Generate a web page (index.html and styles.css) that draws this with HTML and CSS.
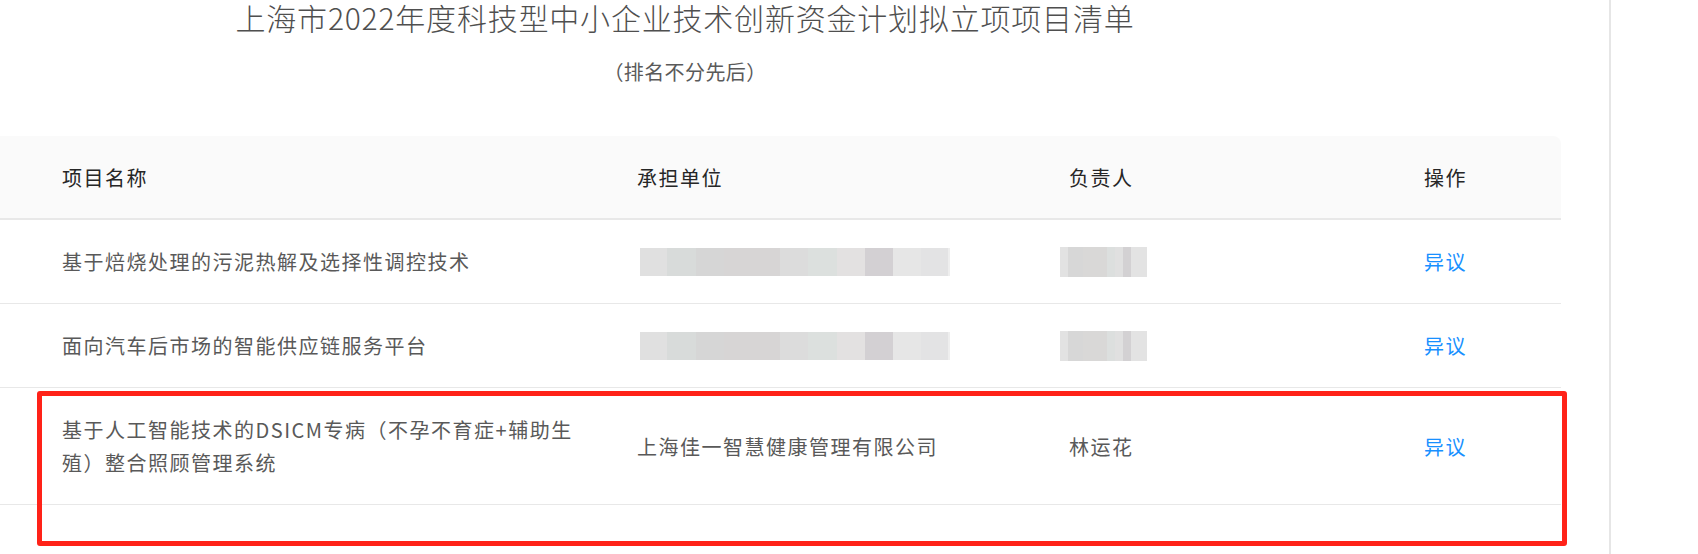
FILE: index.html
```html
<!DOCTYPE html>
<html lang="zh-CN">
<head>
<meta charset="utf-8">
<title>项目清单</title>
<link rel="stylesheet" href="styles.css">
</head>
<body>
<div class="page">
  <main class="main">
    <header class="heading">
      <h1 class="title">上海市2022年度科技型中小企业技术创新资金计划拟立项项目清单</h1>
      <p class="subtitle">（排名不分先后）</p>
    </header>
    <section class="table-wrap">
      <div class="row head">
        <div class="cell c1">项目名称</div>
        <div class="cell c2">承担单位</div>
        <div class="cell c3">负责人</div>
        <div class="cell c4">操作</div>
      </div>
      <div class="row body">
        <div class="cell c1">基于焙烧处理的污泥热解及选择性调控技术</div>
        <div class="cell c2"><span class="blur-org"></span></div>
        <div class="cell c3"><span class="blur-name"></span></div>
        <div class="cell c4"><a class="link" href="#">异议</a></div>
      </div>
      <div class="row body">
        <div class="cell c1">面向汽车后市场的智能供应链服务平台</div>
        <div class="cell c2"><span class="blur-org"></span></div>
        <div class="cell c3"><span class="blur-name"></span></div>
        <div class="cell c4"><a class="link" href="#">异议</a></div>
      </div>
      <div class="row body">
        <div class="cell c1">基于人工智能技术的DSICM专病（不孕不育症+辅助生殖）整合照顾管理系统</div>
        <div class="cell c2">上海佳一智慧健康管理有限公司</div>
        <div class="cell c3">林运花</div>
        <div class="cell c4"><a class="link" href="#">异议</a></div>
      </div>
      <div class="highlight"></div>
    </section>
  </main>
  <aside class="side"></aside>
</div>
</body>
</html>
```

FILE: styles.css
```css
html, body {
  margin: 0;
  padding: 0;
  background: #ffffff;
}

body {
  font-family: "Noto Sans CJK SC", "Noto Sans", sans-serif;
  overflow: hidden;
}

.page {
  display: flex;
  height: 554px;
}

.main {
  width: 1609px;
  flex: none;
}

.side {
  flex: 1;
  border-left: 2px solid #e6e6e6;
}

.heading {
  width: 1370px;
  text-align: center;
  padding-top: 2px;
}

.title {
  margin: 0;
  font-size: 30px;
  line-height: 30px;
  font-weight: 300;
  letter-spacing: 0.8px;
  color: #4f4f4f;
}

.subtitle {
  margin: 26px 0 0;
  font-size: 20px;
  line-height: 28px;
  letter-spacing: 0.4px;
  color: #5a5a5a;
}

.table-wrap {
  position: relative;
  margin-top: 50px;
  width: 1561px;
}

.row {
  display: grid;
  grid-template-columns: 637px 432px 355px 137px;
  align-items: center;
}

.head {
  height: 82px;
  background: #fafafa;
  border-bottom: 2px solid #e8e8e8;
  border-top-right-radius: 8px;
  color: #262626;
}

.body {
  padding: 25px 0;
  border-bottom: 1px solid #e8e8e8;
  color: #595959;
}

.cell {
  font-size: 20px;
  line-height: 33px;
  letter-spacing: 1.5px;
  padding-right: 16px;
}

.c1 {
  padding-left: 62px;
  padding-right: 40px;
}

.blur-org {
  display: block;
  margin-left: 3px;
  width: 310px;
  height: 28px;
  background: linear-gradient(90deg,
    #e0e0e0 0 27px, #d8dbda 27px 56px, #d6d6d6 56px 84px,
    #d7d5d5 84px 140px, #dcdcdc 140px 168px, #dce0de 168px 197px,
    #e3e1e1 197px 225px, #d3d0d3 225px 253px, #e6e6e6 253px 281px,
    #e3e3e4 281px 308px, #eeeeee 308px);
}

.blur-name {
  display: block;
  margin-left: -9px;
  width: 87px;
  height: 30px;
  background: linear-gradient(90deg,
    #e2e2e2 0 8px, #d7d7d7 8px 23px, #d9d8d7 23px 47px,
    #dcdfde 47px 55px, #e0e0e0 55px 63px, #d3d1d3 63px 71px,
    #e3e3e3 71px);
}

.link {
  color: #1890ff;
  text-decoration: none;
}

.highlight {
  position: absolute;
  left: 37px;
  top: 255px;
  width: 1530px;
  height: 155px;
  box-sizing: border-box;
  border: 5px solid #ff2218;
  border-radius: 3px;
  pointer-events: none;
}
```
